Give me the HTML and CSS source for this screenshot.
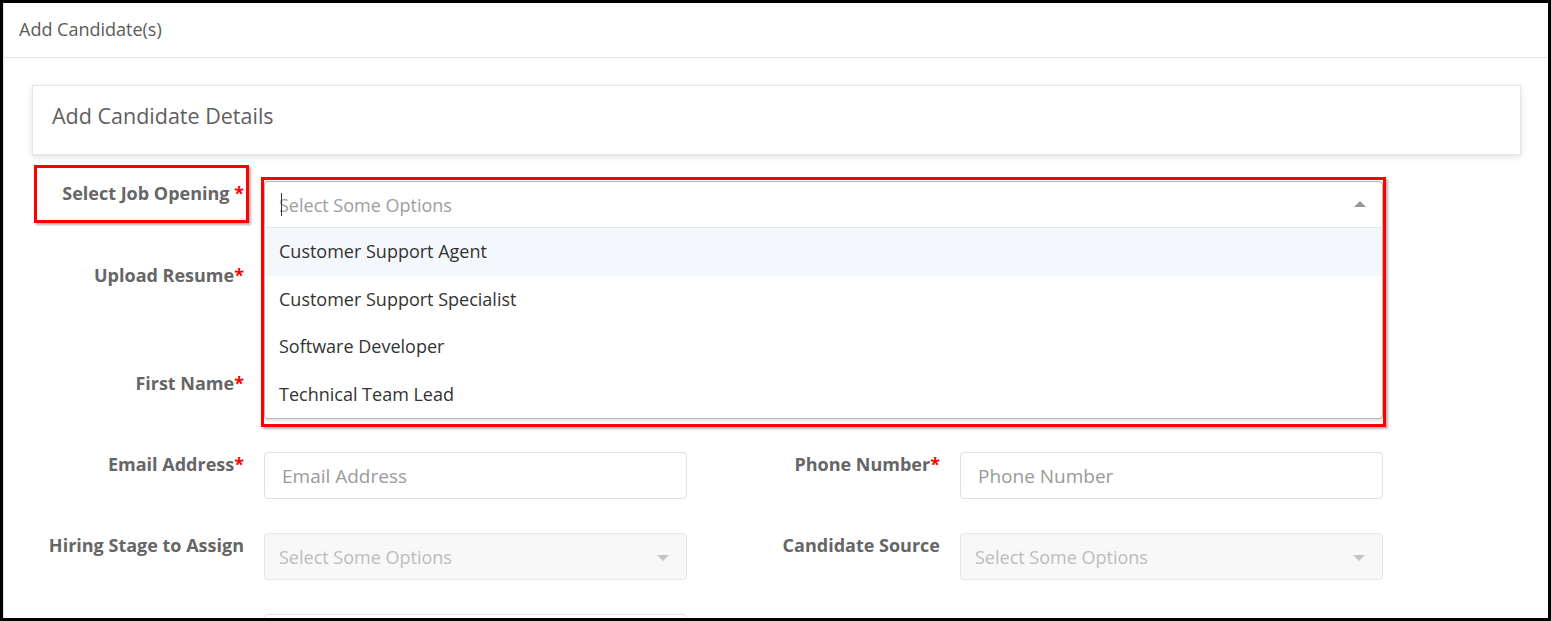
FILE: index.html
```html
<!DOCTYPE html>
<html>
<head>
<meta charset="utf-8">
<link rel="stylesheet" href="styles.css">
</head>
<body>
<div class="frame">
  <div class="panel">
    <div class="panel-head">Add Candidate(s)</div>
    <div class="panel-body">
      <div class="card"><h2 class="card-title">Add Candidate Details</h2></div>
      <div class="form">
        <div class="row">
          <div class="field full">
            <label class="lbl">Select Job Opening <span class="req">*</span><span class="mark mark-label"></span></label>
            <div class="control">
              <div class="chosen open">
                <div class="chosen-search"><span class="caret"></span><span class="ph">Select Some Options</span><span class="arrow-up"></span></div>
                <ul class="chosen-results">
                  <li class="hl">Customer Support Agent</li>
                  <li>Customer Support Specialist</li>
                  <li>Software Developer</li>
                  <li>Technical Team Lead</li>
                </ul>
              </div>
              <span class="mark mark-select"></span>
            </div>
          </div>
        </div>
        <div class="row row-tall">
          <div class="field">
            <label class="lbl">Upload Resume<span class="req">*</span></label>
            <div class="control"><div class="input file-box"></div></div>
          </div>
        </div>
        <div class="row">
          <div class="field">
            <label class="lbl">First Name<span class="req">*</span></label>
            <div class="control"><div class="input"></div></div>
          </div>
        </div>
        <div class="row">
          <div class="field">
            <label class="lbl">Email Address<span class="req">*</span></label>
            <div class="control"><div class="input"><span class="ph">Email Address</span></div></div>
          </div>
          <div class="field">
            <label class="lbl">Phone Number<span class="req">*</span></label>
            <div class="control"><div class="input"><span class="ph">Phone Number</span></div></div>
          </div>
        </div>
        <div class="row">
          <div class="field">
            <label class="lbl">Hiring Stage to Assign</label>
            <div class="control"><div class="input disabled"><span class="ph">Select Some Options</span><span class="arrow-down"></span></div></div>
          </div>
          <div class="field">
            <label class="lbl">Candidate Source</label>
            <div class="control"><div class="input disabled"><span class="ph">Select Some Options</span><span class="arrow-down"></span></div></div>
          </div>
        </div>
        <div class="row">
          <div class="field">
            <label class="lbl">&nbsp;</label>
            <div class="control"><div class="input"></div></div>
          </div>
        </div>
      </div>
    </div>
  </div>
</div>
</body>
</html>
```
FILE: styles.css
```css
* { box-sizing: border-box; }
html, body { margin: 0; padding: 0; }
body {
  font-family: "Open Sans", "Liberation Sans", sans-serif;
  background: #000;
}
.frame {
  height: 621px;
  border: 3px solid #000;
  background: #fff;
  overflow: hidden;
}
.panel {
  height: 100%;
  border-left: 1px solid #e3e3e3;
  background: #fff;
}
.panel-head {
  height: 55px;
  border-bottom: 1px solid #e3e3e3;
  padding: 15px 0 0 15px;
  font-size: 18px;
  line-height: 22px;
  color: #5a5a5a;
}
.panel-body {
  padding: 27px 27px 0 28px;
}
.card {
  height: 70px;
  border: 1px solid #e6e6e6;
  box-shadow: 0 2px 6px rgba(0,0,0,0.12);
  padding: 16px 19px 0;
}
.card-title {
  margin: 0;
  font-size: 21.5px;
  font-weight: 400;
  line-height: 28px;
  color: #5f5f5f;
}
.form {
  margin-top: 26px;
  display: flex;
  flex-direction: column;
  gap: 34px;
}
.row {
  display: flex;
  gap: 41px;
}
.row:first-child { margin-bottom: 1px; }
.row-tall { height: 74px; }
.field {
  display: flex;
  gap: 20px;
  width: 655px;
}
.field.full { width: 1351px; }
.lbl {
  position: relative;
  width: 212px;
  flex: none;
  text-align: right;
  font-size: 18px;
  font-weight: 700;
  line-height: 22px;
  padding-top: 1px;
  color: #666;
  white-space: nowrap;
}
.req { color: #f00; }
.control {
  position: relative;
  width: 423px;
  flex: none;
}
.field.full .control { width: 1119px; }
.input {
  position: relative;
  height: 47px;
  border: 1px solid #e0e0e0;
  border-radius: 4px;
  padding: 0 17px;
  display: flex;
  align-items: center;
  font-size: 19px;
  background: #fff;
}
.ph { color: #9a9a9a; }
.input.disabled { background: #f8f8f8; border-color: #e6e6e6; padding-left: 14px; font-size: 18px; }
.input.disabled .ph { color: #bdbdbd; }
.file-box { height: 74px; }
.arrow-down {
  position: absolute;
  right: 17px;
  top: 21px;
  border-left: 6px solid transparent;
  border-right: 6px solid transparent;
  border-top: 6px solid #c4c4c4;
}
.chosen {
  position: relative;
  height: 47px;
}
.chosen-search {
  position: relative;
  height: 47px;
  border: 1px solid #b9b9b9;
  border-bottom: 1px solid #e2e7ec;
  border-radius: 4px 4px 0 0;
  display: flex;
  align-items: center;
  padding: 0 14px;
  font-size: 18px;
  background: #fff;
}
.chosen-search .ph { color: #9e9e9e; }
.caret {
  position: absolute;
  left: 16px;
  top: 11px;
  width: 1px;
  height: 23px;
  background: #333;
}
.arrow-up {
  position: absolute;
  right: 16px;
  top: 19px;
  border-left: 6px solid transparent;
  border-right: 6px solid transparent;
  border-bottom: 6px solid #999;
}
.chosen-results {
  position: absolute;
  z-index: 5;
  top: 47px;
  left: 0;
  right: 0;
  margin: 0;
  padding: 0;
  list-style: none;
  background: #fff;
  border: 1px solid #b9b9b9;
  border-top: none;
  border-radius: 0 0 4px 4px;
  box-shadow: 0 2px 3px rgba(0,0,0,0.12);
}
.chosen-results li {
  height: 47.5px;
  line-height: 47px;
  padding: 0 14px;
  font-size: 18px;
  color: #333;
}
.chosen-results li.hl { background: #f4f8fc; }
.mark {
  position: absolute;
  border: 3px solid #f00;
  box-shadow: 2px 2px 2px rgba(0,0,0,0.3);
  pointer-events: none;
  z-index: 10;
}
.mark-label {
  left: 2px;
  top: -16px;
  width: 215px;
  height: 58px;
}
.mark-select {
  left: -3px;
  top: -4px;
  width: 1125px;
  height: 250px;
}
```
